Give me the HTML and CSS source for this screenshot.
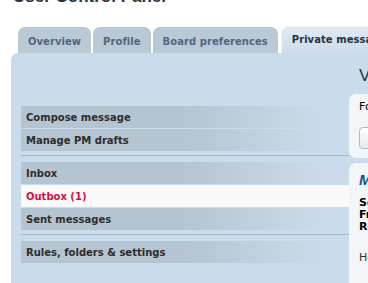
FILE: index.html
```html
<!DOCTYPE html>
<html lang="en">
<head>
  <meta charset="UTF-8" />
  <title>User Control Panel</title>
  <link rel="stylesheet" href="styles.css">
</head>
<body>
  <div class="page">
    <h2 class="page-title">User Control Panel</h2>

    <ul class="tabs">
      <li class="tab"><a href="#">Overview</a></li>
      <li class="tab"><a href="#">Profile</a></li>
      <li class="tab"><a href="#">Board preferences</a></li>
      <li class="tab active"><a href="#">Private messages</a></li>
    </ul>

    <div class="panel">
      <!-- Left side menu -->
      <div class="nav">
        <ul class="nav-list">
          <li><a href="#">Compose message</a></li>
          <li><a href="#">Manage PM drafts</a></li>
        </ul>
        <hr />
        <ul class="nav-list">
          <li><a href="#">Inbox</a></li>
          <li class="active"><a href="#">Outbox (1)</a></li>
          <li><a href="#">Sent messages</a></li>
        </ul>
        <hr />
        <ul class="nav-list">
          <li><a href="#">Rules, folders &amp; settings</a></li>
        </ul>
      </div>

      <!-- Message view -->
      <div class="content">
        <h2 class="content-title">View message</h2>

        <div class="box">
          <p class="folder">Folder: Outbox</p>
          <button class="btn" type="button">Post a reply</button>
        </div>

        <div class="box message">
          <h3>Message title</h3>
          <p><strong>Sent:</strong> Today</p>
          <p><strong>From:</strong> admin</p>
          <p><strong>Recipient:</strong> user</p>
          <p class="body-text">Hello there</p>
        </div>
      </div>
    </div>
  </div>
</body>
</html>
```

FILE: styles.css
```css
/* Reset and base */
* {
  box-sizing: border-box;
  margin: 0;
  padding: 0;
}
html, body {
  overflow: hidden;
}
body {
  width: 368px;
  height: 283px;
  background: #fff;
  color: #333;
  font-family: "DejaVu Sans", Verdana, sans-serif;
  font-size: 10px;
}
a {
  text-decoration: none;
  color: inherit;
}

.page {
  width: 760px;
  padding-left: 11px;
}
.page-title {
  margin: -14px 0 0 2px;
  font-family: "Liberation Sans", Arial, sans-serif;
  font-size: 17px;
  line-height: 21px;
  font-weight: bold;
  color: #28313f;
}

/* Tabs */
.tabs {
  list-style: none;
  display: flex;
  align-items: flex-end;
  gap: 2px;
  height: 26px;
  margin: 20px 0 0 7px;
}
.tab {
  height: 26px;
  padding: 4px 10px 0;
  line-height: 22px;
  letter-spacing: 0.05px;
  border-radius: 7px 7px 0 0;
  background: #b9c9d6;
  color: #536482;
  font-weight: bold;
  white-space: nowrap;
}
.tab.active {
  height: 27px;
  margin-left: 1px;
  padding-top: 2px;
  background: linear-gradient(#e1ebf2, #cadceb);
  border-left: 1px solid #eef3f8;
  border-top: 1px solid #eef3f8;
  color: #28313f;
}

/* Main panel */
.panel {
  display: flex;
  height: 240px;
  padding-left: 10px;
  background: #cadceb;
  border-radius: 7px 0 0 0;
}

/* Side menu */
.nav {
  flex: none;
  width: 328px;
  padding-top: 53px;
}
.nav-list {
  list-style: none;
}
.nav-list li {
  margin-bottom: 1px;
}
.nav-list a {
  display: block;
  height: 22px;
  padding: 2px 0 0 5px;
  line-height: 20px;
  font-weight: bold;
  color: #2d2d2d;
  background: linear-gradient(to right, #b5c4d1 50%, #cadceb 94%);
}
.nav-list .active a {
  background: #f9f9f9;
  color: #d31141;
}
.nav hr {
  border: 0;
  border-top: 1px solid #a5b5c3;
  margin: 4px 0 6px;
}

/* Right column */
.content {
  flex: none;
  width: 320px;
  padding-top: 13px;
}
.content-title {
  padding-left: 10px;
  font-family: "Liberation Sans", Arial, sans-serif;
  font-size: 17px;
  line-height: 20px;
  font-weight: normal;
  color: #28313f;
}
.box {
  margin-top: 8px;
  padding: 6px 10px 9px;
  background: #f3f6f9;
  border-radius: 7px;
}
.folder {
  font-size: 11px;
  line-height: 13px;
  color: #000;
}
.btn {
  display: block;
  height: 22px;
  margin-top: 14px;
  padding: 0 8px;
  border: 1px solid #b4bac0;
  border-radius: 4px;
  background: linear-gradient(#fff, #e9e9e9);
  font: inherit;
  color: #333;
}
.message {
  margin-top: 5px;
  height: 200px;
  padding-top: 8px;
}
.message h3 {
  font-family: "Liberation Sans", Arial, sans-serif;
  font-size: 15px;
  line-height: 18px;
  font-style: italic;
  font-weight: bold;
  color: #105289;
  margin-bottom: 8px;
}
.message p {
  font-size: 11px;
  line-height: 12px;
  color: #000;
}
.message .body-text {
  margin-top: 19px;
  color: #333;
}
```
